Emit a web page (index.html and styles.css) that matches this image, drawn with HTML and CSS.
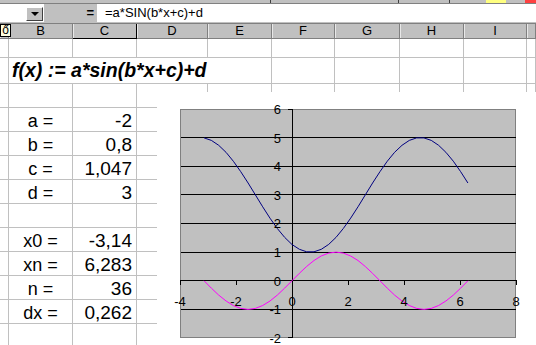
FILE: index.html
```html
<!DOCTYPE html>
<html lang="hu">
<head>
    <meta charset="UTF-8">
    <meta name="viewport" content="width=device-width, initial-scale=1.0">
    <title>f(x) - Munkalap</title>
    <link rel="stylesheet" href="styles.css">
</head>
<body>
    <div class="toolbar">
        <span class="tb-sep first"></span>
        <span class="tb-sep second"></span>
        <span class="tb-sep third"></span>
        <span class="tb-yellow"></span>
        <span class="tb-red"></span>
    </div>

    <div class="formula-bar">
        <div class="name-box"><span class="drop-btn"><i class="arrow"></i></span></div>
        <div class="equals">=</div>
        <div class="formula-input">=a*SIN(b*x+c)+d</div>
    </div>

    <div class="row col-headers">
        <div></div>
        <div>B</div>
        <div class="active">C</div>
        <div>D</div>
        <div>E</div>
        <div>F</div>
        <div>G</div>
        <div>H</div>
        <div>I</div>
        <div></div>
    </div>
    <div class="tooltip">ő</div>

    <div class="sheet">
        <div class="row r-first"><div></div><div></div><div></div><div></div><div></div><div></div><div></div><div></div><div></div><div></div></div>
        <div class="row r-title"><div></div><div class="title">f(x) := a*sin(b*x+c)+d</div><div></div><div></div><div></div><div></div><div></div></div>
        <div class="row"><div></div><div></div><div></div><div></div><div></div><div></div><div></div><div></div><div></div><div></div></div>
        <div class="row"><div></div><div class="label">a =</div><div class="num">-2</div><div></div><div></div><div></div><div></div><div></div><div></div><div></div></div>
        <div class="row"><div></div><div class="label">b =</div><div class="num">0,8</div><div></div><div></div><div></div><div></div><div></div><div></div><div></div></div>
        <div class="row"><div></div><div class="label">c =</div><div class="num">1,047</div><div></div><div></div><div></div><div></div><div></div><div></div><div></div></div>
        <div class="row"><div></div><div class="label">d =</div><div class="num">3</div><div></div><div></div><div></div><div></div><div></div><div></div><div></div></div>
        <div class="row"><div></div><div></div><div></div><div></div><div></div><div></div><div></div><div></div><div></div><div></div></div>
        <div class="row"><div></div><div class="label">x0 =</div><div class="num">-3,14</div><div></div><div></div><div></div><div></div><div></div><div></div><div></div></div>
        <div class="row"><div></div><div class="label">xn =</div><div class="num">6,283</div><div></div><div></div><div></div><div></div><div></div><div></div><div></div></div>
        <div class="row"><div></div><div class="label">n =</div><div class="num">36</div><div></div><div></div><div></div><div></div><div></div><div></div><div></div></div>
        <div class="row"><div></div><div class="label">dx =</div><div class="num">0,262</div><div></div><div></div><div></div><div></div><div></div><div></div><div></div></div>
        <div class="row"><div></div><div></div><div></div><div></div><div></div><div></div><div></div><div></div><div></div><div></div></div>
    </div>

    <!-- embedded chart object, sits over the cells -->
    <div class="chart">
        <svg width="379" height="253" viewBox="157 92 379 253">
            <rect x="180.5" y="109.5" width="335" height="228" fill="#c0c0c0" stroke="#808080"/>
            <g stroke="#000" stroke-width="1">
                <line x1="181" y1="137.5" x2="516" y2="137.5"/>
                <line x1="181" y1="166.5" x2="516" y2="166.5"/>
                <line x1="181" y1="194.5" x2="516" y2="194.5"/>
                <line x1="181" y1="223.5" x2="516" y2="223.5"/>
                <line x1="181" y1="252.5" x2="516" y2="252.5"/>
                <line x1="181" y1="309.5" x2="516" y2="309.5"/>
                <line x1="180" y1="280.5" x2="517" y2="280.5"/>
                <line x1="292.5" y1="109" x2="292.5" y2="338"/>
                <line x1="180.5" y1="280" x2="180.5" y2="285"/>
                <line x1="236.5" y1="280" x2="236.5" y2="285"/>
                <line x1="348.5" y1="280" x2="348.5" y2="285"/>
                <line x1="404.5" y1="280" x2="404.5" y2="285"/>
                <line x1="460.5" y1="280" x2="460.5" y2="285"/>
                <line x1="516.5" y1="280" x2="516.5" y2="285"/>
                <line x1="288" y1="109.5" x2="292" y2="109.5"/>
                <line x1="288" y1="137.5" x2="292" y2="137.5"/>
                <line x1="288" y1="166.5" x2="292" y2="166.5"/>
                <line x1="288" y1="194.5" x2="292" y2="194.5"/>
                <line x1="288" y1="223.5" x2="292" y2="223.5"/>
                <line x1="288" y1="252.5" x2="292" y2="252.5"/>
                <line x1="288" y1="309.5" x2="292" y2="309.5"/>
                <line x1="288" y1="337.5" x2="292" y2="337.5"/>
            </g>
            <polyline id="line-f" fill="none" stroke="#000080" stroke-width="1"/>
            <polyline id="line-sin" fill="none" stroke="#ff00ff" stroke-width="1"/>
            <g class="y-labels" text-anchor="end">
                <text x="281" y="114">6</text>
                <text x="281" y="142.5">5</text>
                <text x="281" y="171">4</text>
                <text x="281" y="199.5">3</text>
                <text x="281" y="228">2</text>
                <text x="281" y="257">1</text>
                <text x="281" y="285.5">0</text>
                <text x="281" y="314">-1</text>
                <text x="281" y="342.5">-2</text>
            </g>
            <g class="x-labels" text-anchor="middle">
                <text x="180" y="305.5">-4</text>
                <text x="236" y="305.5">-2</text>
                <text x="292" y="305.5">0</text>
                <text x="348" y="305.5">2</text>
                <text x="404" y="305.5">4</text>
                <text x="460" y="305.5">6</text>
                <text x="516" y="305.5">8</text>
            </g>
        </svg>
    </div>

    <script>
        // same values as in the sheet
        const a = -2, b = 0.8, c = 1.047, d = 3;
        const x0 = -3.14, xn = 6.283, n = 36;
        const dx = (xn - x0) / n;

        // plot area: x -4..8, y -2..6
        const toX = x => 292 + 28 * x;
        const toY = y => 280.75 - 28.625 * y;

        let fPts = [], sinPts = [];
        for (let i = 0; i <= n; i++) {
            const x = x0 + i * dx;
            fPts.push(toX(x).toFixed(1) + ',' + toY(a * Math.sin(b * x + c) + d).toFixed(1));
            sinPts.push(toX(x).toFixed(1) + ',' + toY(Math.sin(x)).toFixed(1));
        }
        document.getElementById('line-f').setAttribute('points', fPts.join(' '));
        document.getElementById('line-sin').setAttribute('points', sinPts.join(' '));
    </script>
</body>
</html>
```

FILE: styles.css
```css
* {
    box-sizing: border-box;
}
body {
    margin: 0;
    width: 536px;
    height: 345px;
    overflow: hidden;
    position: relative;
    background: #ffffff;
    color: #000000;
    font-family: "Liberation Sans", Arial, sans-serif;
}
/* remains of the toolbar above */
.toolbar {
    height: 4px;
    display: flex;
    background: #c0c0c0;
    border-bottom: 1px solid #808080;
}
.tb-sep {
    width: 1px;
    background: #404040;
}
.tb-sep.first {
    margin-left: 270px;
}
.tb-sep.second {
    margin-left: 127px;
}
.tb-sep.third {
    margin-left: 50px;
}
.tb-yellow {
    width: 20px;
    margin-left: 36px;
    background: #ffff80;
}
.tb-red {
    flex: 1;
    margin-left: 19px;
    background: #ff4040;
}
/* formula bar */
.formula-bar {
    height: 19px;
    display: flex;
    background: #c0c0c0;
}
.name-box {
    width: 44px;
    height: 18px;
    background: #ffffff;
    padding: 3px 0 0 26px;
}
.drop-btn {
    display: flex;
    justify-content: center;
    align-items: center;
    width: 17px;
    height: 14px;
    background: #c0c0c0;
    border: 1px solid;
    border-color: #ffffff #404040 #404040 #ffffff;
}
.arrow {
    border-left: 4px solid transparent;
    border-right: 4px solid transparent;
    border-top: 4px solid #000000;
}
.equals {
    width: 53px;
    padding-right: 3px;
    text-align: right;
    font-size: 13px;
    font-weight: bold;
    line-height: 18px;
}
.formula-input {
    flex: 1;
    height: 18px;
    background: #ffffff;
    padding-left: 8px;
    font-size: 13px;
    line-height: 18px;
}
/* grid */
.row {
    display: grid;
    grid-template-columns: 9px 64px 64px 71px 64px 63px 65px 64px 63px 1fr;
    height: 24px;
}
.row > div {
    border-right: 1px solid #c0c0c0;
    border-bottom: 1px solid #c0c0c0;
}
.col-headers {
    height: 16px;
    border-top: 1px solid #808080;
}
.col-headers > div {
    background: #c0c0c0;
    border-right-color: #808080;
    border-bottom-color: #808080;
    box-shadow: inset 1px 0 #e8e8e8;
    text-align: center;
    font-size: 13px;
    line-height: 14px;
}
.col-headers > div.active {
    border-right-color: #000000;
    border-bottom-color: #000000;
}
.tooltip {
    position: absolute;
    left: 0;
    top: 24px;
    width: 11px;
    height: 13px;
    background: #ffffe1;
    border: 1px solid #000000;
    font-size: 12px;
    line-height: 11px;
    text-align: right;
    padding-right: 1px;
    overflow: hidden;
}
.r-first {
    height: 19px;
}
.r-title {
    height: 26px;
}
.row > .title {
    grid-column: span 4;
    display: flex;
    align-items: center;
    padding-left: 3px;
    font-size: 19.5px;
    font-weight: bold;
    font-style: italic;
    white-space: nowrap;
}
.label,
.num {
    display: flex;
    align-items: flex-end;
    font-size: 18px;
    line-height: 20px;
}
.label {
    justify-content: center;
}
.num {
    justify-content: flex-end;
    padding-right: 4px;
    font-size: 19px;
}
/* chart */
.chart {
    position: absolute;
    left: 157px;
    top: 92px;
    width: 379px;
    height: 253px;
    background: #ffffff;
}
.chart svg {
    display: block;
}
.chart text {
    font-family: "Liberation Sans", Arial, sans-serif;
    font-size: 13px;
    fill: #000000;
}
```
